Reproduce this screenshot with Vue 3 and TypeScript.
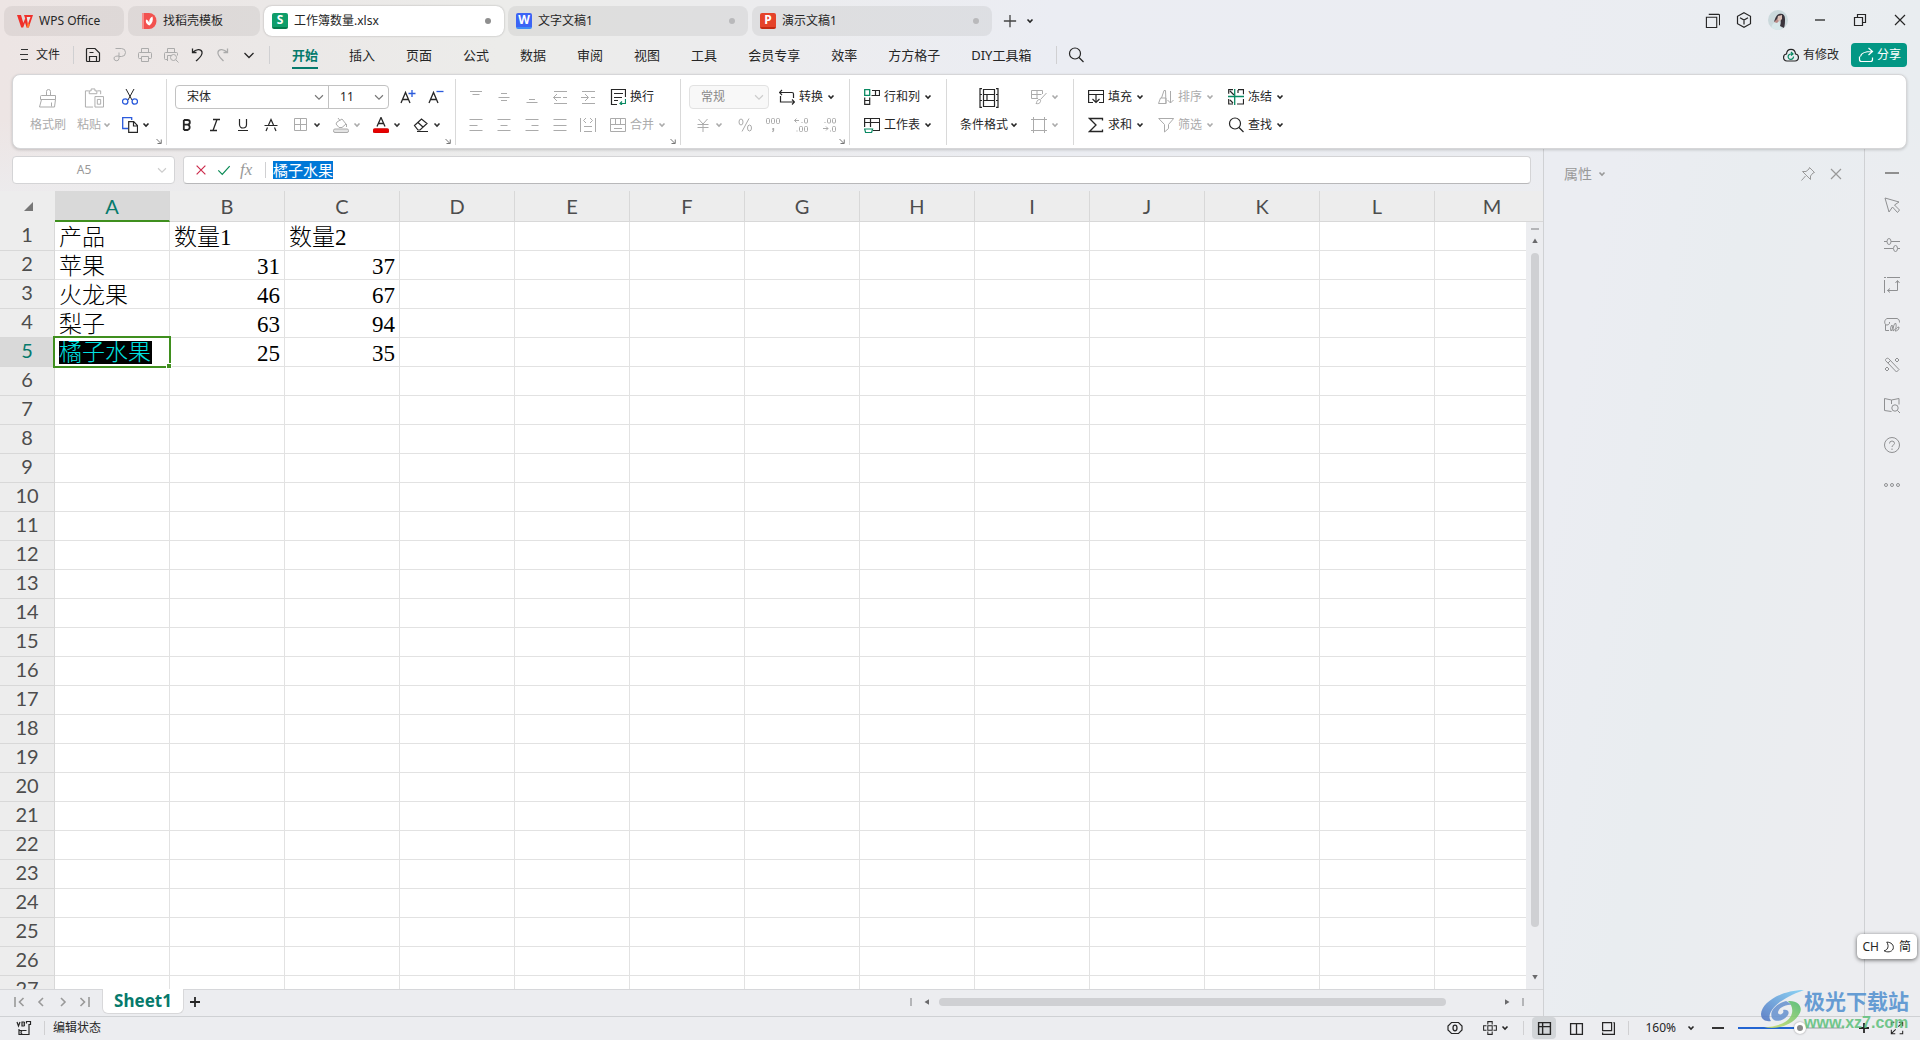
<script setup lang="ts">
import { h, ref } from 'vue'

type Row = { a: string; b: string; c: string }

const shapes: Record<string, string> = {
  wps: '<path d="M0 2h4l2.300 8L8.200 5.500 7 2h9l-4.200 12.500H9.600L8 9.500l-1.800 5H4.200z" fill="#f0302a" stroke="none"/><path d="M9.700 4h3.800L10.900 11z" fill="#ebe5e4" stroke="none"/><path d="M9.600 14.500h2.200l1-3-2-2z" fill="#ff7a2a" stroke="none"/>',
  docer: '<path d="M1 0h7a7.500 8 0 010 16H1z" fill="#f2524f" stroke="none"/><path d="M1 0h2v16H1z" fill="#f7908c" stroke="none"/><path d="M8.500 12.500C5 11 4.500 9 5 6.500c2 .5 3 2 3.200 3.500C8 7 9 4.500 11.500 3.500c1 4-.2 7-3 9z" fill="#fff" stroke="none"/>',
  menu: '<path d="M1 1.500h7M0 6.500h8M1 11.500h7" stroke="#333"/>',
  save: '<path d="M1.500 2.500a1 1 0 011-1h7.500l4.500 4.500v7.500a1 1 0 01-1 1h-11a1 1 0 01-1-1zM4.500 14.500v-5h7v5M4.500 5.500h4" stroke-width="1.200"/>',
  pdf: '<path d="M4.500 1.500h6a4 4 0 010 8H8M8 5.500v6a2.500 2.500 0 11-5-.5c.2-1.500 2-2 5-2"/>',
  print: '<path d="M4.500 5V1.500h7V5M4 11.500H2.500a1 1 0 01-1-1v-4a1 1 0 011-1h11a1 1 0 011 1v4a1 1 0 01-1 1H12M4.500 9.500h7v5h-7z"/>',
  preview: '<path d="M4.500 5V1.500h7V5M4 12.500H2.500a1 1 0 01-1-1v-5a1 1 0 011-1h11a1 1 0 011 1v2M4.500 14V8.500h4"/><circle cx="10.500" cy="10.500" r="3"/><path d="M13 13l2.500 2.500"/>',
  undo: '<path d="M3.500 1.500v4h4M3.500 5.500C7 2 12 1.500 13 5c.8 3.500-2.500 6-6 9" stroke-width="1.300"/>',
  redo: '<path d="M12.500 1.500v4h-4M12.500 5.500C9 2 4 1.500 3 5c-.8 3.500 2.500 6 5.500 9" stroke-width="1.300"/>',
  chev: '<path d="M3.500 6l4.500 4.500L12.500 6" stroke-width="1.300"/>',
  search: '<circle cx="7" cy="6.500" r="5.500" stroke-width="1.200"/><path d="M11 10.500l4.500 4.500" stroke-width="1.300"/>',
  plus: '<path d="M8 1v14M1 8h14" stroke-width="1.500"/>',
  windows: '<path d="M1.500 4.500h11v11h-11zM4 1.500h10.500a1 1 0 011 1V13" stroke-width="1.200"/>',
  cube: '<path d="M8 .7l6.500 3.600v7.400L8 15.300l-6.500-3.600V4.300zM4 5.800l4 2.300 4-2.300M8 8v4.500" stroke-width="1.200"/>',
  minimize: '<path d="M3 8h10" stroke-width="1.300"/>',
  restore: '<path d="M2.500 5.500h8v8h-8zM5.500 5V2.500h8v8H11" stroke-width="1.200"/>',
  close: '<path d="M3 3l10 10M13 3L3 13" stroke-width="1.200"/>',
  cloud: '<path d="M4 14C-.5 13.500-.5 7.500 3.500 7 4 .8 12 .8 12.500 7c4 .5 4 6.500-.5 7z" stroke-width="1.200"/><path d="M10.500 9.500A2.700 2.700 0 118 7h1.500M8 5l2 2-2 1.500" stroke="#0a8a63" stroke-width="1.200"/>',
  share: '<path d="M1.500 9.500v3a2 2 0 002 2h9a2 2 0 002-2v-2M2.500 9.500C3 6 6 4.500 14 4.500M10.500 1l4 3.500-4 3.500" stroke-width="1.200"/>',
  brush: '<path d="M8.500 7.500v-4a2 2 0 014 0v4M2.500 8.500a1 1 0 011-1h14v4h-15zM3.500 11.500L1.500 19h15l1-7.500M13.500 18.500v-4"/>',
  paste: '<path d="M5 2.500H1.500v17h8M14 2.500h3.500V6M5.500 5.500v-3h2V.500h4v2h2v3zM11.500 8.500h9v11h-9z"/><path d="M14 11.500h3.500v5H14z"/>',
  cut: '<path d="M4 0l6 11M12 0L6 11" /><g stroke="#2b5bdc" stroke-width="1.300"><circle cx="3.200" cy="12.500" r="2.700"/><circle cx="12.800" cy="12.500" r="2.700"/></g>',
  copy: '<path d="M6 11.500H.700V.700h9V3" stroke="#2b5bdc" stroke-width="1.300"/><path d="M6.700 4.700h5l3.800 3.800v6.800H6.700zM11.500 5v4h4" stroke-width="1.200"/>',
  aplus: '<path d="M1 14L5.500 3.500 10 14M2.500 10.500h6" stroke-width="1.300"/><path d="M8.500 4.500h7M12 1v7" stroke="#2b5bdc" stroke-width="1.300"/>',
  aminus: '<path d="M1 14L5.500 3.500 10 14M2.500 10.500h6" stroke-width="1.300"/><path d="M8.500 2.500h7" stroke="#2b5bdc" stroke-width="1.300"/>',
  bold: '<path d="M4.800 3v10M4.800 3h3.700a2.300 2.300 0 010 4.700H5M8.500 7.700a2.700 2.700 0 010 5.300H4.800" stroke-width="1.800"/>',
  italic: '<path d="M6 2.500h7M3 13.500h7M10 2.500l-4 11" stroke-width="1.300"/>',
  underline: '<path d="M4.500 2v5.500a3.500 3.500 0 007 0V2M3 13.500h10" stroke-width="1.200"/>',
  strike: '<path d="M1.500 8.500h13M5.500 8L8 2.500 10.500 8M4.500 10.500L3 14M11.500 10.500L13 14" stroke-width="1.200"/>',
  border: '<path d="M1.500 1.500h12v12h-12zM7.500 2v11M2 7.500h11"/>',
  fill: '<path d="M4 5l5-3 4 5-4 3.500H6L3 7zM5 1l2 2.500M13.500 7v3"/><rect x=".5" y="12" width="15" height="3.500" rx="1.500" fill="#e4e4e4"/>',
  fontcolor: '<path d="M4 9.500L8 .500l4 9M5.500 6.500h5" stroke-width="1.300"/><rect x="0" y="11.500" width="16" height="4.500" rx="1.800" fill="#e60000" stroke="#b00" stroke-width=".5"/>',
  eraser: '<path d="M1.500 8.500L8.500 2l5.500 4.500-7 6.500H5zM5 5.500l5.500 5M4 14.500h11" stroke-width="1.200"/>',
  top: '<path d="M2 2.500h12M4.500 5.500h7"/>',
  middle: '<path d="M5 4.500h6M2.500 8.500h11M5 11.500h6"/>',
  bottom: '<path d="M5 10.500h6M2.500 13.500h11"/>',
  outdent: '<path d="M2 2.500h13M2 14.500h13M1.500 8.500H9M5 5L1.500 8.500 5 12M11 8.500h4"/>',
  indent: '<path d="M2 2.500h13M2 14.500h13M1 8.500h7M5 5l3.500 3.500L5 12M11 8.500h4"/>',
  left: '<path d="M1.500 2.500h13M1.500 8.500h8M1.500 13.500h13"/>',
  center: '<path d="M1.500 2.500h13M4.500 8.500h7M1.500 13.500h13"/>',
  right: '<path d="M1.500 2.500h13M7.500 8.500h7M1.500 13.500h13"/>',
  justify: '<path d="M1.500 2.500h13M1.500 8.500h13M1.500 13.500h13"/>',
  spread: '<path d="M.500 1v14M15.500 1v14M6 1L3.500 3.500 6 6M10 1l2.500 2.500L10 6M4 9.500h8M4 14.500h8"/>',
  wrap: '<path d="M7 15.500H1.500v-15h14V8M4 4.500h9M4 8.500h8M4 11.500h4" stroke-width="1.200"/><path d="M15.500 10v4.500H10M12 12.500l-2 2 2 1.500" stroke="#0a8a63" stroke-width="1.200"/>',
  merge: '<path d="M.500 1.500h15v13H.500zM.500 7.500h15M5.500 1.500v6M10.500 1.500v6M4 11.500h8"/>',
  convert: '<path d="M3 1L.500 3.500 3 6M.500 3.500H13a1.500 1.500 0 011.500 1.500v4M1.500 7v6H15M13 10.500l2.500 2.500-2.500 2.500" stroke-width="1.200"/>',
  yen: '<path d="M3.500 2L8 7l4.500-5M2.500 7.500h11M2.500 10.500h11M8 7v8"/>',
  percent: '<path d="M12 1.500L5 14.500"/><ellipse cx="4" cy="5" rx="2" ry="3"/><ellipse cx="12.500" cy="11" rx="2" ry="3"/>',
  comma: '<rect x="1.500" y="1.500" width="3" height="5" rx="1"/><rect x="6.500" y="1.500" width="3" height="5" rx="1"/><rect x="11.500" y="1.500" width="3" height="5" rx="1"/><path d="M8.500 11v2.500L7.500 15M8 11v2" stroke-width="1.300"/>',
  decup: '<path d="M6 3.500H1.500M3.500 1.500l-2 2 2 2M8.500 5.500h1M3.500 14h1"/><rect x="11.500" y="1.500" width="3" height="4.500" rx="1"/><rect x="6.500" y="9.500" width="3" height="5" rx="1"/><rect x="11.500" y="9.500" width="3" height="5" rx="1"/>',
  decdown: '<path d="M2 11.500h5M5 9.500l2 2-2 2M9 14h1M3.500 5.500h1"/><rect x="6.500" y="1.500" width="3" height="4.500" rx="1"/><rect x="11.500" y="1.500" width="3" height="4.500" rx="1"/><rect x="11.500" y="9.500" width="3" height="5" rx="1"/>',
  rowcol: '<path d="M8 1.500h7.500v5H7.500M11.500 1.500v5M.700 8.500v6.800h5V8.500M.700 11.500h5" stroke-width="1.200"/><path d="M.700.700h5v5.600h-5z" stroke="#0a8a63" stroke-width="1.300"/>',
  sheet: '<path d="M.600 10V1.500h15v12H9M.600 5.500h15M6.500 1.500V10" stroke-width="1.200"/><path d="M.600 12h8l-1 3.500h-6z" stroke="#0a8a63" stroke-width="1.200"/>',
  cond: '<path d="M3 .700H1v18.600h2M17 .700h2v18.600h-2M4.500 1.500h11v5h-11zM4.500 12.500h11v6h-11zM4.500 6.500v6M8 6.500h7.500v6H8zM1 6.500h2M1 12.500h2M17 6.500h2M17 12.500h2" stroke-width="1.200"/>',
  cellstyle: '<path d="M7 9.500H.500v-8h11V5M.500 5.500h10M6 1.500v8M15.500 4l-6 6.500M5 14.500c2 .5 4 0 4.500-2s-1-2.500-2.500-1.500-1 2.500-2 3.500z"/>',
  frame: '<path d="M2.500 0v16M13.500 0v16M0 2.500h16M0 13.500h16"/>',
  fillin: '<path d="M5 13.500H.600v-12h15v12H11M.600 5.500h15M8 5.500v8M4.500 10L8 13.500l3.500-3.500" stroke-width="1.200"/>',
  sum: '<path d="M14.500 3.500v-2h-13L8 8l-6.500 6.500h13v-2" stroke-width="1.300"/>',
  sort: '<path d="M3.500 9L6 1.500h1.500L8 14.500M.500 14.500h7.500V9H2.500zM12.500 2v12M9.500 11l3 3 3-3"/>',
  filter: '<path d="M.700 1.500h15l-5.200 6v4l-4 3.500V7.500z"/>',
  freeze: '<path d="M5 .700h-4.300v4M10 .700h5.500v4.500M15.500 10v5H9M.700 10v5H5M2 2l4 4M2 11l3 3M10 4V1" stroke-width="1.200"/><path d="M6.700 0v16M0 7.500h16" stroke="#0a8a63" stroke-width="1.300"/>',
  launcher: '<path d="M3 4l8 8M12.500 5v8H5" stroke-width="1.800"/>',
  cross: '<path d="M3 3l10 10M13 3L3 13" stroke="#cc2b4c" stroke-width="1.400"/>',
  check: '<path d="M1.500 8.500l4.500 4.500L14.500 3.500" stroke="#0a8a55" stroke-width="1.400"/>',
  pin: '<path d="M9.500 1.500l5 5-1.500.5-2.500 3v3.500l-8-8H6L9 3zM5.500 10L1.500 14.500"/>',
  pointer: '<path d="M1 1l14 4-4.500 3 5 5-2 2.500-5-5.500L5 15z"/>',
  sliders: '<path d="M0 4.500h3M7 4.500h9M0 11.500h9M13.500 11.500h2.500"/><ellipse cx="5" cy="4.500" rx="2" ry="3"/><ellipse cx="11.500" cy="11.500" rx="2" ry="3"/>',
  select: '<path d="M3 .500h13M.500 3v13M0 .500h2M13.500 4v9.500H3.500M11.500 6l2-2.500 2 2.500M6 11.500l-2.500 2 2.500 2"/>',
  leaf: '<path d="M5 13.500H1.500V7.500c-1.500-2-.8-5 1.500-6h10c2 .5 2.500 2 2.500 4M5.500 5a2.500 2.500 0 01-4 2.500M7 14c-1-3 0-5 1-6 1 2 .5 5-1 6zm2 0c0-4 1-7 2.500-8 1.500 3 .5 6-2.500 8zm2 0c1-2 2-4 4-4 0 3-2 4-4 4z"/>',
  wand: '<path d="M1.500 3.500a2 2 0 013-2l10.500 11-2.500 2.500zM4 6l2.500-2.500M13 1l2 2-2 2-2-2zM3 10l2 2-2 2-2-2z"/>',
  book: '<path d="M7.500 14.500L.500 13.500v-12l7 1.500 7.500-1.500v6M7.500 3v4"/><circle cx="11" cy="11" r="3.200"/><path d="M13.500 13.500L16 16"/>',
  help: '<circle cx="8" cy="8" r="7.500"/><path d="M5.500 6.500a2.500 2.500 0 115 0C10.500 8 8 8 8 10M8 11.500v1.500"/>',
  more: '<circle cx="2" cy="8" r="1.500"/><circle cx="8" cy="8" r="1.500"/><circle cx="14" cy="8" r="1.500"/>',
  first: '<path d="M4 3v10M12.500 4l-4 4 4 4" stroke-width="1.600"/>',
  prev: '<path d="M10 4L6 8l4 4" stroke-width="1.600"/>',
  next: '<path d="M6 4l4 4-4 4" stroke-width="1.600"/>',
  last: '<path d="M12 3v10M3.500 4l4 4-4 4" stroke-width="1.600"/>',
  add: '<path d="M8 3v10M3 8h10" stroke-width="1.800"/>',
  vba: '<path d="M1 2l1.500 4L4 2M6 2v4h1.500a1 1 0 000-2 1 1 0 000-2zM10.500 3.500v-2h4v3H13v10H7a2 2 0 010-4h3.500M3 9v5.500h4M3 10.500h3" stroke-width="1.200"/>',
  eye: '<path d="M4.500 2.500h7L15 6v4l-3.500 3.500h-7L1 10V6z" stroke-width="1.200"/><ellipse cx="8" cy="8" rx="2" ry="2.800" stroke-width="1.300"/>',
  crosshair: '<path d="M5.500 5.500h5v5h-5zM5.500 4V.700h5V4M5.500 12v3.300h5V12M4 5.500H.700v5H4M12 5.500h3.300v5H12" stroke-width="1.200"/>',
  normal: '<path d="M1.700 1.700h12.600v12.600H1.700zM6 2v12M2 6h12" stroke-width="1.500"/>',
  columns: '<path d="M1.700 2.700h12.600v11.600H1.700zM8 3v11" stroke-width="1.400"/>',
  pages: '<path d="M1.700 1.700h9.600v8.600H1.700zM14.300 1.700v12.600H1.700v-2M14.300 1.700h-1" stroke-width="1.300"/>',
  full: '<path d="M10 1.500h4.500V6M14.500 1.500l-5 5M6 14.500H1.500V10M1.500 14.500l5-5M1.500 5V1.500H5M14.500 11v3.500H11" stroke-width="1.200"/>',
  moon: '<path d="M5 1.500c6 0 10 4 8.500 9-2 4.500-8 5-12 2.500 4-.5 7.500-5.500 3.500-11.500z" stroke-width="1.300"/>',
  tri: '<path d="M8 3l5.500 9h-11z" fill="currentColor" stroke="none"/>'
}

const boxes: Record<string, string> = {
  brush: '0 0 20 20',
  paste: '0 0 21 20',
  cond: '0 0 20 20',
  menu: '0 0 14 14'
}

const Icon = (props: { name: string; size?: number }) =>
  h('svg', {
    viewBox: boxes[props.name] ?? '0 0 16 16',
    width: props.size ?? 16,
    height: props.size ?? 16,
    fill: 'none',
    stroke: 'currentColor',
    'stroke-width': 1,
    'aria-hidden': 'true',
    innerHTML: shapes[props.name]
  })
Icon.props = ['name', 'size']

const Caret = () =>
  h('svg', {
    viewBox: '0 0 8 8',
    width: 8,
    height: 8,
    fill: 'none',
    stroke: 'currentColor',
    'stroke-width': 1.6,
    'aria-hidden': 'true',
    innerHTML: '<path d="M1.500 2.500L4 5l2.500-2.500"/>'
  })

const docs = [
  { kind: 'S', title: '工作簿数量.xlsx', active: true },
  { kind: 'W', title: '文字文稿1', active: false },
  { kind: 'P', title: '演示文稿1', active: false }
]
const quick = [
  { icon: 'save', label: '保存', off: false },
  { icon: 'pdf', label: '输出为PDF', off: true },
  { icon: 'print', label: '打印', off: true },
  { icon: 'preview', label: '打印预览', off: true },
  { icon: 'undo', label: '撤销', off: false },
  { icon: 'redo', label: '恢复', off: true },
  { icon: 'chev', label: '更多', off: false }
]
const menus = ['开始', '插入', '页面', '公式', '数据', '审阅', '视图', '工具', '会员专享', '效率', '方方格子', 'DIY工具箱']
const activeMenu = ref('开始')
const styles = ['bold', 'italic', 'underline', 'strike']
const splits = [
  { icon: 'border', off: true, dark: true },
  { icon: 'fill', off: true, dark: false },
  { icon: 'fontcolor', off: false, dark: true },
  { icon: 'eraser', off: false, dark: true }
]
const alignTop = ['top', 'middle', 'bottom', 'outdent', 'indent']
const alignBottom = ['left', 'center', 'right', 'justify', 'spread']
const numberTools = ['percent', 'comma', 'decup', 'decdown']
const editTop = [
  { icon: 'fillin', label: '填充', off: false },
  { icon: 'sort', label: '排序', off: true },
  { icon: 'freeze', label: '冻结', off: false }
]
const editBottom = [
  { icon: 'sum', label: '求和', off: false },
  { icon: 'filter', label: '筛选', off: true },
  { icon: 'search', label: '查找', off: false }
]

const columns = 'ABCDEFGHIJKLM'.split('')
const data: Row[] = [
  { a: '产品', b: '数量1', c: '数量2' },
  { a: '苹果', b: '31', c: '37' },
  { a: '火龙果', b: '46', c: '67' },
  { a: '梨子', b: '63', c: '94' },
  { a: '橘子水果', b: '25', c: '35' }
]
const editing = ref('橘子水果')

function cell(row: number, col: number): string {
  const r = data[row - 1]
  return r ? [r.a, r.b, r.c][col] ?? '' : ''
}
const isNumber = (text: string) => /^\d+$/.test(text)

const rail = ['pointer', 'sliders', 'select', 'leaf', 'wand', 'book', 'help', 'more']
const navs = ['first', 'prev', 'next', 'last']
const zoom = ref(60)
</script>

<template>
  <div class="app">
    <header class="titlebar">
      <button class="tab home"><Icon name="wps" />WPS Office</button>
      <button class="tab docer"><Icon name="docer" />找稻壳模板</button>
      <button v-for="d in docs" :key="d.kind" class="tab doc" :class="{ active: d.active }">
        <span class="badge" :class="d.kind">{{ d.kind }}</span>{{ d.title }}<i class="dot"></i>
      </button>
      <button class="new" aria-label="新建"><Icon name="plus" :size="14" /></button>
      <button class="new-more" aria-label="更多"><Caret /></button>
      <div class="window-tools">
        <button aria-label="窗口"><Icon name="windows" :size="15" /></button>
        <button aria-label="应用"><Icon name="cube" /></button>
        <button class="avatar-button" aria-label="账户">
          <svg class="avatar" viewBox="0 0 20 20" width="20" height="20">
            <defs><clipPath id="face"><circle cx="10" cy="10" r="10" /></clipPath></defs>
            <g clip-path="url(#face)">
              <rect width="20" height="20" fill="#cbd9dc" />
              <path d="M3 20c0-5 3-9 8-9l3 9z" fill="#d8e8ea" />
              <path d="M11 4c4-1 6 1 6 5 0 3 0 6-1 9l-4-2c1-3 1-5 0-7-2 0-3 2-6 3 1-3 2-7 5-8z" fill="#3a343c" />
              <path d="M10 6l4-1v4l-2 2-3-1z" fill="#dcc0b6" />
              <path d="M6 12l3-3 2 2-2 2z" fill="#b98a86" />
            </g>
          </svg>
        </button>
        <button class="win" aria-label="最小化"><Icon name="minimize" /></button>
        <button class="win" aria-label="还原"><Icon name="restore" /></button>
        <button class="win" aria-label="关闭"><Icon name="close" /></button>
      </div>
    </header>

    <nav class="menubar">
      <button class="file"><Icon name="menu" :size="14" />文件</button>
      <i class="bar"></i>
      <div class="quick">
        <button v-for="q in quick" :key="q.icon" :class="{ off: q.off }" :aria-label="q.label"><Icon :name="q.icon" /></button>
      </div>
      <i class="bar"></i>
      <div class="menus">
        <button v-for="m in menus" :key="m" :class="{ current: m === activeMenu }" @click="activeMenu = m">{{ m }}</button>
      </div>
      <i class="bar"></i>
      <button class="find" aria-label="搜索"><Icon name="search" /></button>
      <div class="menu-right">
        <button class="changed"><Icon name="cloud" />有修改</button>
        <button class="share"><Icon name="share" />分享</button>
      </div>
    </nav>

    <section class="ribbon">
      <div class="group clip">
        <button class="big off"><Icon name="brush" :size="20" /><span>格式刷</span></button>
        <button class="big off"><Icon name="paste" :size="20" /><span>粘贴<Caret /></span></button>
        <div class="stack">
          <div class="line"><button class="labelled" aria-label="剪切"><Icon name="cut" /></button></div>
          <div class="line"><button class="labelled" aria-label="复制"><Icon name="copy" /><Caret /></button></div>
        </div>
        <Icon class="launcher" name="launcher" :size="8" />
      </div>

      <div class="group font">
        <div class="stack">
          <div class="line">
            <div class="combo">
              <label class="face"><select aria-label="字体"><option>宋体</option></select><Icon name="chev" :size="14" /></label>
              <label class="size"><select aria-label="字号"><option>11</option></select><Icon name="chev" :size="14" /></label>
            </div>
            <button class="tool" aria-label="增大字号"><Icon name="aplus" /></button>
            <button class="tool" aria-label="减小字号"><Icon name="aminus" /></button>
          </div>
          <div class="line">
            <button v-for="s in styles" :key="s" class="tool" :aria-label="s"><Icon :name="s" /></button>
            <div class="splits">
              <button v-for="s in splits" :key="s.icon" class="split" :class="{ off: s.off, dark: s.dark }" :aria-label="s.icon">
                <Icon :name="s.icon" /><Caret />
              </button>
            </div>
          </div>
        </div>
        <Icon class="launcher" name="launcher" :size="8" />
      </div>

      <div class="group align">
        <div class="stack off">
          <div class="line"><button v-for="a in alignTop" :key="a" class="tool" :aria-label="a"><Icon :name="a" /></button></div>
          <div class="line"><button v-for="a in alignBottom" :key="a" class="tool" :aria-label="a"><Icon :name="a" /></button></div>
        </div>
        <div class="stack">
          <div class="line"><button class="labelled"><Icon name="wrap" />换行</button></div>
          <div class="line"><button class="labelled off"><Icon name="merge" />合并<Caret /></button></div>
        </div>
        <Icon class="launcher" name="launcher" :size="8" />
      </div>

      <div class="group number">
        <div class="stack">
          <div class="line">
            <label class="format"><select aria-label="数字格式" disabled><option>常规</option></select><Icon name="chev" :size="14" /></label>
            <button class="labelled"><Icon name="convert" />转换<Caret /></button>
          </div>
          <div class="line off">
            <button class="split off" aria-label="货币"><Icon name="yen" /><Caret /></button>
            <div class="numbers">
              <button v-for="n in numberTools" :key="n" class="tool" :aria-label="n"><Icon :name="n" /></button>
            </div>
          </div>
        </div>
        <Icon class="launcher" name="launcher" :size="8" />
      </div>

      <div class="group rows">
        <div class="stack">
          <div class="line"><button class="labelled"><Icon name="rowcol" />行和列<Caret /></button></div>
          <div class="line"><button class="labelled"><Icon name="sheet" />工作表<Caret /></button></div>
        </div>
      </div>

      <div class="group cond">
        <button class="big"><Icon name="cond" :size="20" /><span>条件格式<Caret /></span></button>
        <div class="stack off">
          <div class="line"><button class="labelled" aria-label="单元格样式"><Icon name="cellstyle" /><Caret /></button></div>
          <div class="line"><button class="labelled" aria-label="表格样式"><Icon name="frame" /><Caret /></button></div>
        </div>
      </div>

      <div class="group edit">
        <div class="stack">
          <div class="line"><button v-for="e in editTop" :key="e.icon" class="labelled" :class="{ off: e.off }"><Icon :name="e.icon" />{{ e.label }}<Caret /></button></div>
          <div class="line"><button v-for="e in editBottom" :key="e.icon" class="labelled" :class="{ off: e.off }"><Icon :name="e.icon" />{{ e.label }}<Caret /></button></div>
        </div>
      </div>
    </section>

    <div class="body">
      <main class="workspace">
        <div class="formula-row">
          <label class="name-box"><input aria-label="名称框" value="A5" /><Icon name="chev" :size="14" /></label>
          <div class="formula">
            <button aria-label="取消"><Icon name="cross" :size="14" /></button>
            <button aria-label="输入"><Icon name="check" :size="14" /></button>
            <button class="fx" aria-label="插入函数">fx</button>
            <i class="bar"></i>
            <input v-model="editing" class="formula-text" aria-label="编辑栏" />
          </div>
        </div>

        <div class="sheet-area">
          <div class="sheet">
            <table>
              <thead>
                <tr>
                  <th class="corner"><svg width="9" height="9" viewBox="0 0 9 9"><path d="M9 0v9H0z" fill="#777" /></svg></th>
                  <th v-for="c in columns" :key="c" :class="{ on: c === 'A' }">{{ c }}</th>
                </tr>
              </thead>
              <tbody>
                <tr v-for="r in 27" :key="r">
                  <th :class="{ on: r === 5 }">{{ r }}</th>
                  <td v-for="(c, i) in columns" :key="c" :class="{ num: isNumber(cell(r, i)), selected: r === 5 && i === 0 }">
                    <div v-if="r === 5 && i === 0" class="editor"><input v-model="editing" aria-label="A5" /></div>
                    <template v-else>{{ cell(r, i) }}</template>
                  </td>
                </tr>
              </tbody>
            </table>
          </div>
          <div class="vscroll">
            <div class="vhead"></div>
            <i class="mark"></i>
            <Icon class="up" name="tri" :size="8" />
            <i class="thumb"></i>
            <Icon class="down" name="tri" :size="8" />
          </div>
        </div>

        <div class="sheetbar">
          <div class="navs">
            <button v-for="n in navs" :key="n" :aria-label="n"><Icon :name="n" /></button>
          </div>
          <button class="sheet-tab">Sheet1</button>
          <button class="add" aria-label="新建工作表"><Icon name="add" /></button>
          <div class="hscroll">
            <i class="mark"></i>
            <Icon class="to-left" name="tri" :size="8" />
            <div class="track"><i class="thumb"></i></div>
            <Icon class="to-right" name="tri" :size="8" />
            <i class="mark"></i>
          </div>
        </div>
      </main>

      <aside class="panel">
        <h2>属性<Caret /></h2>
        <button aria-label="固定"><Icon name="pin" /></button>
        <button aria-label="关闭"><Icon name="close" /></button>
      </aside>

      <aside class="rail">
        <button class="collapse" aria-label="收起"><i></i></button>
        <button v-for="r in rail" :key="r" :aria-label="r"><Icon :name="r" /></button>
      </aside>
    </div>

    <footer class="status">
      <Icon class="vba" name="vba" />
      <i class="bar"></i>
      <span>编辑状态</span>
      <div class="status-right">
        <button aria-label="护眼"><Icon name="eye" /></button>
        <button class="read" aria-label="阅读"><Icon name="crosshair" :size="14" /><Caret /></button>
        <i class="bar"></i>
        <button class="view on" aria-label="普通"><Icon name="normal" :size="15" /></button>
        <button class="view" aria-label="分页"><Icon name="columns" :size="15" /></button>
        <button class="view" aria-label="页面"><Icon name="pages" :size="15" /></button>
        <i class="bar"></i>
        <button class="percent">160%<Caret /></button>
        <button class="minus" aria-label="缩小"><i></i></button>
        <input v-model="zoom" class="zoom" type="range" min="0" max="100" aria-label="缩放" />
        <button class="zoom-in" aria-label="放大"><Icon name="add" /></button>
        <button class="fullscreen" aria-label="全屏"><Icon name="full" :size="14" /></button>
      </div>
    </footer>

    <div class="ime">CH<Icon name="moon" :size="12" />简</div>

    <div class="watermark">
      <svg viewBox="0 0 48 40" width="48" height="40">
        <defs>
          <linearGradient id="sky" x1="0" y1="1" x2="1" y2="0"><stop offset="0" stop-color="#4a6fc0" /><stop offset="1" stop-color="#7cd0f6" /></linearGradient>
          <linearGradient id="grass" x1="0" y1="1" x2="1" y2="0"><stop offset="0" stop-color="#d7e26a" /><stop offset="1" stop-color="#45b86a" /></linearGradient>
        </defs>
        <path d="M44 0C22 0 2 12 1 24c0 5 4 8 10 7 -5-6 2-20 33-31z" fill="url(#sky)" />
        <path d="M26 11c-10 3-17 10-14 17 3 5 12 3 16-3 2-4-1-6-5-5 2 4-4 6-5 3 0-5 8-9 14-8 -2-2-4-3-6-4z" fill="#6591cf" />
        <path d="M28 11c12-1 16 8 10 15C31 36 15 40 4 37c14 0 26-5 28-14 1-5-1-9-4-12z" fill="url(#grass)" />
      </svg>
      <div><strong>极光下载站</strong><span>www.xz7.com</span></div>
    </div>
  </div>
</template>

<style>
body {
  margin: 0;
  overflow: hidden;
}
</style>

<style scoped>
.app {
  position: relative;
  display: flex;
  flex-direction: column;
  height: 100vh;
  overflow: hidden;
  color: #262626;
  font: 12px/18px "Noto Sans", "Noto Sans CJK SC", sans-serif;
  background:
    linear-gradient(180deg, rgba(236, 237, 240, 0) 120px, #ecedf0 220px),
    linear-gradient(90deg, #ede5e4 0, #ebe8e7 14%, #ececea 26%, #ececee 40%, #ebedf3 55%, #ebedf2 80%, #e9edf0 100%);
}
button {
  padding: 0;
  border: 0;
  background: none;
  color: inherit;
  font: inherit;
  display: flex;
  align-items: center;
  white-space: nowrap;
}
svg {
  flex: none;
  display: block;
}
input,
select {
  box-sizing: border-box;
  padding: 0;
  border: 0;
  outline: 0;
  margin: 0;
  background: none;
  color: inherit;
  font: inherit;
  appearance: none;
  opacity: 1;
}
.off {
  color: #ababab;
}
.bar {
  width: 1px;
  background: #d0d0d2;
  flex: none;
}

.titlebar {
  display: flex;
  gap: 4px;
  padding: 6px 0 0 4px;
}
.tab {
  height: 30px;
  border-radius: 8px;
  background: rgba(0, 0, 0, 0.06);
  gap: 6px;
}
.home {
  width: 120px;
  padding-left: 13px;
}
.docer {
  width: 132px;
  padding-left: 13px;
}
.doc {
  width: 240px;
  padding: 0 13px 0 8px;
}
.doc.active {
  background: #fff;
  box-shadow: 0 0 2px rgba(0, 0, 0, 0.3);
}
.badge {
  width: 16px;
  height: 16px;
  border-radius: 2px;
  color: #fff;
  font: bold 12px/14px "Noto Sans", sans-serif;
  text-align: center;
  background: linear-gradient(#0f9d6a 14px, #067a4c 14px);
}
.badge.W {
  background: linear-gradient(#3c64f5 14px, #3f8cf5 14px);
}
.badge.P {
  background: linear-gradient(#e5432a 14px, #c32a12 14px);
}
.dot {
  width: 6px;
  height: 6px;
  margin-left: auto;
  border-radius: 50%;
  background: #b9b9bb;
}
.active .dot {
  background: #8e8e8e;
}
.new {
  margin-left: 7px;
  color: #444;
}
.new-more {
  margin-left: 5px;
}
.window-tools {
  display: flex;
  margin-left: auto;
  height: 28px;
}
.window-tools button {
  width: 32px;
  justify-content: center;
}
.window-tools .avatar-button {
  width: 36px;
  margin-right: 4px;
}
.window-tools .win {
  width: 40px;
}

.menubar {
  display: flex;
  align-items: center;
  height: 38px;
  padding-left: 20px;
  font-size: 13px;
}
.menubar .bar {
  height: 18px;
}
.file {
  gap: 2px;
  width: 53px;
  font-size: 12px;
}
.quick {
  display: flex;
  padding: 0 7px 0 6px;
}
.quick button {
  width: 26px;
  height: 26px;
  justify-content: center;
}
.menus {
  display: flex;
  gap: 31px;
  padding: 2px 25px 0 22px;
}
.menus button {
  height: 26px;
  border-bottom: 2px solid transparent;
}
.menus .current {
  color: #067a6c;
  font-weight: bold;
  border-color: #067a6c;
}
.find {
  margin-left: 11px;
}
.menu-right {
  display: flex;
  margin-left: auto;
  padding-right: 13px;
  gap: 12px;
  font-size: 12px;
}
.changed {
  gap: 4px;
}
.share {
  height: 24px;
  padding: 0 6px 0 7px;
  gap: 3px;
  border-radius: 4px;
  background: #029784;
  color: #fff;
}

.ribbon {
  position: relative;
  z-index: 1;
  display: flex;
  flex: none;
  box-sizing: border-box;
  height: 75px;
  margin: 0 13px 0 12px;
  border: 1px solid #d6d6d8;
  border-radius: 8px;
  background: #fff;
  box-shadow: 0 1px 3px rgba(0, 0, 0, 0.18);
}
.group {
  position: relative;
  display: flex;
  height: 66px;
  margin-top: 4px;
  padding-top: 4px;
  box-sizing: border-box;
  border-right: 1px solid #d9d9d9;
}
.group:last-child {
  border-right: 0;
}
.launcher {
  position: absolute;
  right: 3px;
  bottom: 0;
  color: #666;
}
.stack {
  display: flex;
  flex-direction: column;
}
.line {
  display: flex;
  align-items: center;
  height: 28px;
}
.big {
  flex-direction: column;
  height: 56px;
  box-sizing: border-box;
  padding-top: 5px;
  gap: 8px;
}
.big span {
  display: flex;
  align-items: center;
  gap: 2px;
  height: 18px;
}
.labelled {
  gap: 4px;
}
.tool {
  width: 28px;
  height: 28px;
  justify-content: center;
}
.split {
  width: 40px;
  gap: 4px;
  padding-left: 6px;
  box-sizing: border-box;
}
.split.dark svg:last-child {
  color: #333;
}
.clip {
  padding-left: 17px;
  padding-right: 16px;
  gap: 11px;
}
.font {
  padding-left: 6px;
  padding-right: 5px;
}
.splits,
.numbers {
  display: flex;
  margin-left: 2px;
}
.combo {
  display: flex;
  box-sizing: border-box;
  width: 214px;
  height: 24px;
  margin: 0 5px 0 2px;
  border: 1px solid #c2c2c2;
  border-radius: 4px;
}
.combo label,
.format {
  display: flex;
  align-items: center;
  justify-content: space-between;
  padding: 0 2px 0 11px;
}
.combo svg {
  color: #777;
}
.face {
  flex: 1;
}
.size {
  width: 46px;
  border-left: 1px solid #c2c2c2;
}
.format {
  box-sizing: border-box;
  width: 80px;
  height: 24px;
  margin-right: 10px;
  border: 1px solid #e2e2e2;
  border-radius: 4px;
  background: #f8f8f8;
  color: #888;
}
.format svg {
  color: #ccc;
}
.align {
  gap: 8px;
  padding-left: 6px;
  padding-right: 14px;
}
.number {
  padding-left: 8px;
  padding-right: 6px;
}
.rows {
  padding-left: 14px;
  padding-right: 14px;
}
.cond {
  gap: 13px;
  padding-left: 13px;
  padding-right: 14px;
}
.edit {
  padding-left: 14px;
}
.edit .line {
  gap: 14px;
}

.body {
  display: flex;
  flex: 1;
  min-height: 0;
}
.workspace {
  display: flex;
  flex-direction: column;
  flex: 1;
  min-width: 0;
}
.formula-row {
  display: flex;
  gap: 8px;
  padding: 7px 12px 7px;
}
.name-box,
.formula {
  display: flex;
  align-items: center;
  box-sizing: border-box;
  height: 28px;
  border: 1px solid #d4d4d6;
  border-radius: 4px;
  background: #fff;
}
.name-box {
  width: 163px;
  padding-right: 5px;
  color: #999;
}
.name-box input {
  flex: 1;
  min-width: 0;
  text-align: center;
}
.name-box svg {
  color: #ccc;
}
.formula {
  flex: 1;
  padding-left: 10px;
  gap: 9px;
  border-bottom-color: #b8b8ba;
}
.formula .fx {
  width: 20px;
  color: #999;
  font: italic 17px/18px "Liberation Serif", serif;
}
.formula .bar {
  height: 16px;
  margin-left: -4px;
}
.formula-text {
  width: 60px;
  height: 18px;
  margin-left: -2px;
  background: #0078d7;
  color: #fff;
  font-size: 15px;
}

.sheet-area {
  display: flex;
  flex: 1;
  min-height: 0;
}
.sheet {
  flex: 1;
  min-width: 0;
  overflow: hidden;
  background: #fff;
}
table {
  border-collapse: separate;
  border-spacing: 0;
  table-layout: fixed;
  width: 1550px;
}
th,
td {
  box-sizing: border-box;
  width: 115px;
  height: 29px;
  padding: 0;
  border-right: 1px solid #e2e2e2;
  border-bottom: 1px solid #e2e2e2;
}
th {
  background: #ededed;
  color: #4d4d4d;
  font: 20px/24px Lato, sans-serif;
  border-color: #d8d8d8;
}
tbody th {
  padding-bottom: 4px;
}
thead th {
  height: 31px;
}
th:first-child {
  width: 55px;
}
thead .corner {
  border-right-color: #ededed;
  border-bottom-color: #ededed;
}
.corner svg {
  margin-left: 24px;
}
th.on {
  background: #d9d9d9;
  color: #067a6c;
}
thead th.on {
  border-bottom: 2px solid #3f8f1e;
}
td {
  padding: 3px 4px 0;
  color: #000;
  font: 300 23px/25px "Liberation Serif", "Noto Sans CJK SC", serif;
  white-space: nowrap;
}
td.num {
  text-align: right;
}
td.selected {
  position: relative;
  padding: 0;
}
.editor {
  position: absolute;
  inset: -2px -2px -2px -2px;
  box-sizing: border-box;
  border: 2px solid #3f8f1e;
  background: #fff;
}
.editor::after {
  content: "";
  position: absolute;
  right: -3px;
  bottom: -3px;
  width: 4px;
  height: 4px;
  background: #3f8f1e;
  border: 1px solid #fff;
}
.editor input {
  display: block;
  width: 93px;
  height: 23px;
  margin: 3px 0 0 4px;
  background: #000;
  color: #00e0e0;
}
.vscroll {
  display: flex;
  flex-direction: column;
  align-items: center;
  width: 17px;
}
.vhead {
  align-self: stretch;
  height: 30px;
  background: #ededed;
  border-bottom: 1px solid #d8d8d8;
}
.mark {
  background: #b4b5b8;
  flex: none;
}
.vscroll .mark {
  width: 8px;
  height: 2px;
  margin: 6px 0 7px;
}
.vscroll svg,
.hscroll svg {
  color: #6a6a6c;
}
.vscroll .thumb {
  flex: 1;
  width: 8px;
  margin: 8px 0 46px;
}
.thumb {
  border-radius: 4px;
  background: #cfd0d3;
}
.down {
  transform: rotate(180deg);
  margin-bottom: 8px;
}
.sheetbar {
  display: flex;
  align-items: center;
  box-sizing: border-box;
  height: 27px;
  padding-bottom: 2px;
  border-top: 1px solid #d6d7da;
}
.navs {
  display: flex;
  gap: 6px;
  padding-left: 11px;
  width: 91px;
  color: #999;
}
.sheet-tab {
  align-self: flex-start;
  box-sizing: border-box;
  width: 82px;
  height: 25px;
  margin-top: -1px;
  justify-content: center;
  border: 1px solid #d8d8da;
  border-top: 0;
  border-radius: 0 0 6px 6px;
  background: #fff;
  color: #067a6c;
  font: bold 17px/24px "Noto Sans", sans-serif;
}
.add {
  margin-left: 3px;
}
.hscroll {
  display: flex;
  align-items: center;
  width: 614px;
  margin-left: auto;
  margin-right: 19px;
}
.hscroll .mark {
  width: 2px;
  height: 8px;
}
.to-left {
  transform: rotate(-90deg);
  margin: 0 8px 0 11px;
}
.to-right {
  transform: rotate(90deg);
  margin-right: 11px;
}
.track {
  flex: 1;
  padding-right: 57px;
}
.track .thumb {
  display: block;
  height: 8px;
}

.panel {
  display: flex;
  align-items: flex-start;
  box-sizing: border-box;
  width: 322px;
  padding: 16px 20px 0;
  border-left: 1px solid #cfd1d4;
  border-right: 1px solid #cfd1d4;
  background: linear-gradient(100deg, #ebedf2 15%, #e9edf0 45%, rgba(236, 237, 240, 0) 90%);
  color: #999;
}
.panel h2 {
  display: flex;
  align-items: center;
  gap: 6px;
  margin: 0 auto 0 0;
  font-size: 14px;
  font-weight: normal;
}
.panel button {
  height: 18px;
  margin-left: 12px;
}
.rail {
  display: flex;
  flex-direction: column;
  align-items: center;
  box-sizing: border-box;
  gap: 24px;
  width: 55px;
  padding: 16px 1px 0 0;
  color: #8f9092;
}
.collapse {
  height: 16px;
  margin-bottom: -8px;
}
.collapse i,
.minus i {
  width: 14px;
  height: 2px;
  background: #8f8f8f;
}

.status {
  display: flex;
  align-items: center;
  box-sizing: border-box;
  height: 24px;
  padding-bottom: 1px;
  border-top: 1px solid #cfd1d4;
}
.status .bar {
  height: 14px;
}
.vba {
  margin: 0 12px 0 16px;
}
.status > span {
  margin-left: 8px;
}
.status-right {
  display: flex;
  align-items: center;
  margin-left: auto;
  padding-right: 16px;
}
.read {
  gap: 4px;
  margin: 0 14px 0 20px;
}
.view {
  width: 24px;
  height: 22px;
  margin-left: 8px;
  justify-content: center;
  border-radius: 4px;
}
.view.on {
  background: #d2d5d8;
}
.view + .bar {
  margin: 0 16px 0 8px;
}
.percent {
  gap: 11px;
  margin-right: 17px;
}
.minus i {
  width: 12px;
  background: #333;
}
.zoom {
  width: 106px;
  height: 12px;
  margin: 0 12px 0 14px;
  background: linear-gradient(90deg, #2264d1 58%, #c2c5c9 58%) center / 100% 2px no-repeat;
}
.zoom::-webkit-slider-thumb {
  appearance: none;
  width: 12px;
  height: 12px;
  border-radius: 50%;
  border: 3px solid #fff;
  background: #888;
  box-shadow: 0 0 2px rgba(0, 0, 0, 0.4);
}
.fullscreen {
  margin-left: 18px;
}

.ime {
  position: absolute;
  right: 3px;
  bottom: 81px;
  display: flex;
  align-items: center;
  gap: 4px;
  height: 25px;
  padding: 0 6px;
  border-radius: 5px;
  background: #fff;
  box-shadow: 0 1px 4px rgba(0, 0, 0, 0.6);
}
.watermark {
  position: absolute;
  right: 11px;
  bottom: 7px;
  display: flex;
  opacity: 0.85;
  pointer-events: none;
}
.watermark svg {
  margin: 1px -4px 0 0;
}
.watermark div {
  display: flex;
  flex-direction: column;
  gap: 2px;
}
.watermark strong {
  color: #4f8fcf;
  font: bold 21px/22px "Noto Sans CJK SC", sans-serif;
}
.watermark span {
  color: #5cc07a;
  font: bold 16px/20px "Liberation Sans", sans-serif;
}
</style>
